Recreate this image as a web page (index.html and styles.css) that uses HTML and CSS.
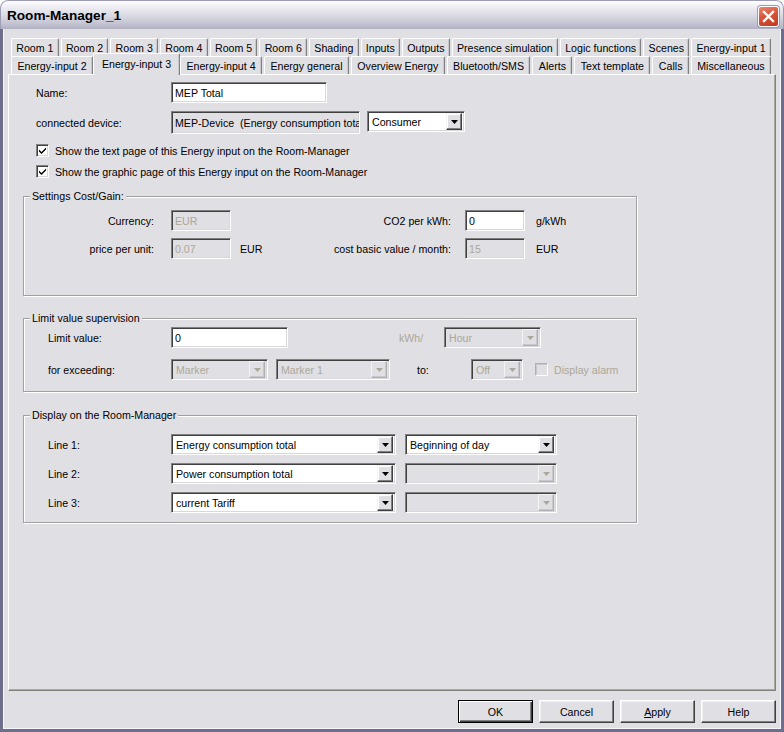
FILE: index.html
```html
<!DOCTYPE html>
<html>
<head>
<meta charset="utf-8">
<title>Room-Manager_1</title>
<link rel="stylesheet" href="styles.css">
</head>
<body>
<div class="window">
  <div class="titlebar">
    <span class="title">Room-Manager_1</span>
    <div class="close"><svg width="13" height="13" viewBox="0 0 13 13"><path d="M2 2 L11 11 M11 2 L2 11" stroke="#fff" stroke-width="2.4" stroke-linecap="square"/></svg></div>
  </div>
  <div class="client">
    <div class="tabs">
      <div class="tabrow">
        <div class="tab">Room 1</div><div class="tab">Room 2</div><div class="tab">Room 3</div><div class="tab">Room 4</div><div class="tab">Room 5</div><div class="tab">Room 6</div><div class="tab">Shading</div><div class="tab">Inputs</div><div class="tab">Outputs</div><div class="tab">Presence simulation</div><div class="tab">Logic functions</div><div class="tab">Scenes</div><div class="tab">Energy-input 1</div>
      </div>
      <div class="tabrow">
        <div class="tab">Energy-input 2</div><div class="tab active">Energy-input 3</div><div class="tab">Energy-input 4</div><div class="tab">Energy general</div><div class="tab">Overview Energy</div><div class="tab">Bluetooth/SMS</div><div class="tab">Alerts</div><div class="tab">Text template</div><div class="tab">Calls</div><div class="tab">Miscellaneous</div>
      </div>
    </div>
    <div class="panel">
      <div class="main">
        <div class="row">
          <span class="lbl-main">Name:</span>
          <div class="field w-name">MEP Total</div>
        </div>
        <div class="row row-device">
          <span class="lbl-main">connected device:</span>
          <div class="field readonly w-device">MEP-Device  (Energy consumption tota</div>
          <div class="select w-consumer"><span class="val">Consumer</span><span class="dd"><svg width="7" height="4" viewBox="0 0 7 4"><path d="M0 0H7L3.5 4Z" fill="#000"/></svg></span></div>
        </div>
        <div class="row row-check first">
          <span class="check"><svg width="9" height="9" viewBox="0 0 9 9"><path d="M1 3.5 L3.5 6 L8 1.5 V3.5 L3.5 8 L1 5.5Z" fill="#000"/></svg></span>
          <span class="check-lbl">Show the text page of this Energy input on the Room-Manager</span>
        </div>
        <div class="row row-check">
          <span class="check"><svg width="9" height="9" viewBox="0 0 9 9"><path d="M1 3.5 L3.5 6 L8 1.5 V3.5 L3.5 8 L1 5.5Z" fill="#000"/></svg></span>
          <span class="check-lbl">Show the graphic page of this Energy input on the Room-Manager</span>
        </div>
      </div>

      <div class="group group-cost">
        <div class="legend">Settings Cost/Gain:</div>
        <div class="cost-grid">
          <span class="g-lbl">Currency:</span>
          <div class="field disabled">EUR</div>
          <span></span>
          <span class="g-lbl2">CO2 per kWh:</span>
          <div class="field">0</div>
          <span class="g-unit2">g/kWh</span>

          <span class="g-lbl">price per unit:</span>
          <div class="field disabled">0.07</div>
          <span class="g-unit">EUR</span>
          <span class="g-lbl2">cost basic value / month:</span>
          <div class="field disabled">15</div>
          <span class="g-unit2">EUR</span>
        </div>
      </div>

      <div class="group group-limit">
        <div class="legend">Limit value supervision</div>
        <div class="row row-limit1">
          <span class="lbl-grp">Limit value:</span>
          <div class="field w-limit">0</div>
          <span class="lbl-kwh">kWh/</span>
          <div class="select disabled w-hour"><span class="val">Hour</span><span class="dd"><svg width="7" height="4" viewBox="0 0 7 4"><path d="M0 0H7L3.5 4Z" fill="#aca899"/></svg></span></div>
        </div>
        <div class="row row-limit2">
          <span class="lbl-grp">for exceeding:</span>
          <div class="select disabled w-marker"><span class="val">Marker</span><span class="dd"><svg width="7" height="4" viewBox="0 0 7 4"><path d="M0 0H7L3.5 4Z" fill="#aca899"/></svg></span></div>
          <div class="select disabled w-marker1"><span class="val">Marker 1</span><span class="dd"><svg width="7" height="4" viewBox="0 0 7 4"><path d="M0 0H7L3.5 4Z" fill="#aca899"/></svg></span></div>
          <span class="lbl-to">to:</span>
          <div class="select disabled w-off"><span class="val">Off</span><span class="dd"><svg width="7" height="4" viewBox="0 0 7 4"><path d="M0 0H7L3.5 4Z" fill="#aca899"/></svg></span></div>
          <span class="check disabled"></span>
          <span class="check-lbl disabled-text">Display alarm</span>
        </div>
      </div>

      <div class="group group-display">
        <div class="legend">Display on the Room-Manager</div>
        <div class="row row-line first">
          <span class="lbl-grp">Line 1:</span>
          <div class="select w-line"><span class="val">Energy consumption total</span><span class="dd"><svg width="7" height="4" viewBox="0 0 7 4"><path d="M0 0H7L3.5 4Z" fill="#000"/></svg></span></div>
          <div class="select w-line2"><span class="val">Beginning of day</span><span class="dd"><svg width="7" height="4" viewBox="0 0 7 4"><path d="M0 0H7L3.5 4Z" fill="#000"/></svg></span></div>
        </div>
        <div class="row row-line">
          <span class="lbl-grp">Line 2:</span>
          <div class="select w-line"><span class="val">Power consumption total</span><span class="dd"><svg width="7" height="4" viewBox="0 0 7 4"><path d="M0 0H7L3.5 4Z" fill="#000"/></svg></span></div>
          <div class="select disabled w-line2"><span class="val"></span><span class="dd"><svg width="7" height="4" viewBox="0 0 7 4"><path d="M0 0H7L3.5 4Z" fill="#aca899"/></svg></span></div>
        </div>
        <div class="row row-line">
          <span class="lbl-grp">Line 3:</span>
          <div class="select w-line"><span class="val">current Tariff</span><span class="dd"><svg width="7" height="4" viewBox="0 0 7 4"><path d="M0 0H7L3.5 4Z" fill="#000"/></svg></span></div>
          <div class="select disabled w-line2"><span class="val"></span><span class="dd"><svg width="7" height="4" viewBox="0 0 7 4"><path d="M0 0H7L3.5 4Z" fill="#aca899"/></svg></span></div>
        </div>
      </div>
    </div>
    <div class="buttons">
      <div class="button default">OK</div>
      <div class="button">Cancel</div>
      <div class="button"><u>A</u>pply</div>
      <div class="button">Help</div>
    </div>
  </div>
</div>
</body>
</html>
```

FILE: styles.css
```css
html, body {
  margin: 0;
  background: #ffffff;
}
body {
  font-family: "Liberation Sans", Arial, sans-serif;
  font-size: 10.65px;
  color: #000;
}
.window {
  width: 784px;
  height: 732px;
  box-sizing: border-box;
  display: flex;
  flex-direction: column;
  border-radius: 8px 8px 0 0;
  overflow: hidden;
  background: #e0dfe3;
}
.titlebar {
  height: 28px;
  flex: none;
  display: flex;
  align-items: center;
  justify-content: space-between;
  padding: 0 4px 0 6px;
  background: linear-gradient(180deg, #ffffff 0%, #f0f0f5 18%, #d8d8e2 55%, #c0c0d0 85%, #b0b0c2 100%);
  border: 1px solid #9c9cb4;
  border-bottom: none;
  border-radius: 8px 8px 0 0;
}
.title {
  font-family: "Liberation Sans", Arial, sans-serif;
  font-weight: bold;
  font-size: 13.6px;
  color: #000;
  padding-top: 1px;
}
.close {
  width: 21px;
  height: 21px;
  box-sizing: border-box;
  border: 1px solid #ffffff;
  border-radius: 3px;
  background: linear-gradient(160deg, #ec8a70 0%, #d8533a 45%, #c0381f 100%);
  box-shadow: 0 0 0 1px #9a9ab0;
  display: flex;
  align-items: center;
  justify-content: center;
  margin-top: 2px;
}
.client {
  flex: 1;
  display: flex;
  flex-direction: column;
  border: 3px solid #6e6e8c;
  border-top: none;
  box-shadow: inset 1px 0 #f6f6fa, inset -1px 0 #f6f6fa, inset 0 -1px #f6f6fa;
  padding: 9px 2px 0 2px;
}

/* tabs */
.tabs {
  margin: 0 3px 0 6px;
  width: 760px;
}
.tabrow {
  display: flex;
  height: 18px;
}
.tab {
  flex: 1 1 auto;
  box-sizing: border-box;
  height: 18px;
  padding: 2px 4px 0 4px;
  text-align: center;
  white-space: nowrap;
  line-height: 14px;
  border-top: 1px solid #ffffff;
  border-left: 1px solid #ffffff;
  border-right: 1px solid #808080;
  box-shadow: inset -1px 0 #c8c8cc;
  border-radius: 2px 2px 0 0;
  margin-right: 2px;
  background: #e0dfe3;
}
.tab:last-child {
  margin-right: 0;
}
.tab.active {
  position: relative;
  z-index: 2;
  height: 22px;
  margin: -3px 0 -1px -2px;
  padding: 3px 6px 0 6px;
  flex-grow: 1.4;
}

/* panel */
.panel {
  margin: 0 3px 0 3px;
  height: 617px;
  box-sizing: border-box;
  border-top: 1px solid #ffffff;
  border-left: 1px solid #ffffff;
  border-right: 1px solid #7e8278;
  border-bottom: 1px solid #7e8278;
  box-shadow: inset -1px -1px #a8aba0;
  padding: 7px 0 0 14px;
}
.main {
  padding-left: 13px;
}
.row {
  display: flex;
  align-items: center;
  height: 21px;
}
.lbl-main {
  width: 135px;
  flex: none;
}
.row-device {
  margin-top: 8px;
  height: 23px;
}
.row-check.first {
  margin-top: 6px;
}
.row-check {
  height: 21px;
}

.field {
  box-sizing: border-box;
  height: 21px;
  background: #ffffff;
  border: 1px solid;
  border-color: #808080 #ffffff #ffffff #808080;
  box-shadow: inset 1px 1px #404040, inset -1px -1px #d8d8dc;
  padding: 3px 3px 0 3px;
  line-height: 14px;
  white-space: pre;
  overflow: hidden;
  flex: none;
}
.field.disabled {
  background: #e0dfe3;
  color: #aca899;
}
.field.readonly {
  background: #e0dfe3;
  height: 23px;
  padding-top: 4px;
}
.w-name { width: 156px; }
.w-device { width: 189px; }

.select {
  box-sizing: border-box;
  height: 21px;
  display: flex;
  align-items: center;
  background: #ffffff;
  border: 1px solid;
  border-color: #808080 #ffffff #ffffff #808080;
  box-shadow: inset 1px 1px #404040, inset -1px -1px #d8d8dc;
  padding: 2px;
  flex: none;
}
.select .val {
  flex: 1;
  padding-left: 2px;
  white-space: nowrap;
  overflow: hidden;
  line-height: 14px;
}
.select .dd {
  width: 16px;
  height: 17px;
  box-sizing: border-box;
  flex: none;
  display: flex;
  align-items: center;
  justify-content: center;
  background: #e0dfe3;
  border: 1px solid;
  border-color: #f4f4f4 #404040 #404040 #f4f4f4;
  box-shadow: inset -1px -1px #808080, inset 1px 1px #ffffff;
}
.select.disabled {
  background: #e0dfe3;
  color: #aca899;
}
.select.disabled .dd {
  border-color: #f4f4f4 #b0b0b0 #b0b0b0 #f4f4f4;
  box-shadow: inset -1px -1px #c8c8cc;
}
.w-consumer { width: 98px; margin-left: 7px; margin-top: -2px; }

.check {
  width: 13px;
  height: 13px;
  box-sizing: border-box;
  flex: none;
  background: #ffffff;
  border: 1px solid;
  border-color: #808080 #ffffff #ffffff #808080;
  box-shadow: inset 1px 1px #404040, inset -1px -1px #d8d8dc;
  display: flex;
  align-items: center;
  justify-content: center;
}
.check.disabled {
  background: #e0dfe3;
  border-color: #b0b0b0 #ffffff #ffffff #b0b0b0;
  box-shadow: inset 1px 1px #c8c8cc;
}
.check-lbl {
  margin-left: 6px;
  white-space: nowrap;
}
.disabled-text {
  color: #aca899;
}

/* groups */
.group {
  width: 614px;
  box-sizing: border-box;
  border: 1px solid #a0a0a0;
  box-shadow: inset 1px 1px #ffffff, 1px 1px #ffffff;
}
.legend {
  width: fit-content;
  margin: -7px 0 0 6px;
  padding: 0 2px;
  line-height: 13px;
  background: #e0dfe3;
}
.group-cost {
  margin-top: 14px;
  height: 100px;
}
.cost-grid {
  display: grid;
  grid-template-columns: 147px 60px 69px 165px 60px auto;
  grid-template-rows: 21px 21px;
  row-gap: 7px;
  align-items: center;
  margin-top: 7px;
}
.g-lbl {
  text-align: right;
  padding-right: 17px;
}
.g-lbl2 {
  text-align: right;
  padding-right: 14px;
  white-space: nowrap;
}
.g-unit {
  padding-left: 9px;
}
.g-unit2 {
  padding-left: 11px;
}

.group-limit {
  margin-top: 22px;
  height: 74px;
}
.lbl-grp {
  width: 123px;
  padding-left: 24px;
  flex: none;
}
.row-limit1 {
  margin-top: 2px;
}
.row-limit2 {
  margin-top: 11px;
}
.w-limit { width: 117px; }
.lbl-kwh {
  margin-left: 111px;
  width: 45px;
  color: #aca899;
  flex: none;
}
.w-hour { width: 97px; }
.w-marker { width: 97px; }
.w-marker1 { width: 114px; margin-left: 8px; }
.lbl-to {
  margin-left: 27px;
  width: 54px;
  flex: none;
}
.w-off { width: 52px; }
.row-limit2 .check {
  margin-left: 12px;
}

.group-display {
  margin-top: 23px;
  height: 108px;
}
.row-line {
  margin-top: 8px;
}
.row-line.first {
  margin-top: 12px;
}
.w-line { width: 225px; }
.w-line2 { width: 152px; margin-left: 9px; }

/* buttons */
.buttons {
  display: flex;
  justify-content: flex-end;
  gap: 6px;
  margin: 9px 3px 0 0;
}
.button {
  width: 75px;
  height: 23px;
  box-sizing: border-box;
  display: flex;
  align-items: center;
  justify-content: center;
  background: #e0dfe3;
  border: 1px solid;
  border-color: #ffffff #404040 #404040 #ffffff;
  box-shadow: inset -1px -1px #808080, inset 1px 1px #f0f0f0;
}
.button.default {
  border: 1px solid #000000;
  box-shadow: inset 1px 1px #ffffff, inset -1px -1px #404040, inset -2px -2px #808080;
}
```
